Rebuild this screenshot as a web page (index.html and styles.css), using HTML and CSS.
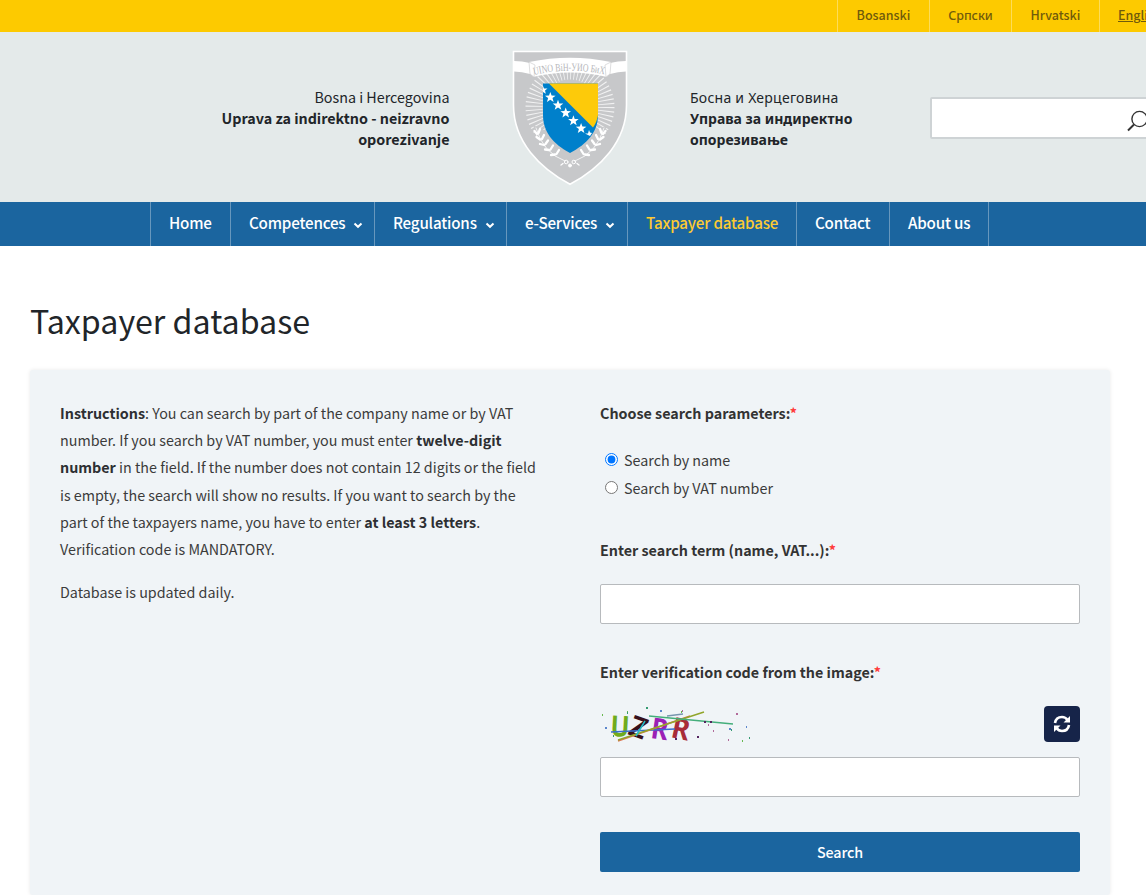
FILE: index.html
```html
<!DOCTYPE html>
<html lang="en">
<head>
<meta charset="utf-8">
<title>Taxpayer database</title>
<link rel="stylesheet" href="styles.css">
</head>
<body>
<div class="topbar">
  <a class="lang w92">Bosanski</a><a class="lang w82 cyr">Српски</a><a class="lang w88">Hrvatski</a><a class="lang w88 current">English</a>
</div>
<header class="header">
  <div class="title left"><span>Bosna i Hercegovina</span><br><b>Uprava za indirektno - neizravno<br>oporezivanje</b></div>
  <svg class="crest" width="116" height="136" viewBox="0 0 116 136">
    <path d="M1.500 1.500H114.500V55C114.500 92 88 118 58 134.300C28 118 1.500 92 1.500 55Z" fill="#c7c8ca" stroke="#fff" stroke-width="1.600"/>
    <circle cx="58" cy="57" r="36" fill="none" stroke="#fff" stroke-width="17" stroke-dasharray="1 2.770" stroke-opacity=".75"/>
    <path d="M21 75Q27 98 58 118Q89 98 95 75L85 80H31Z" fill="#c7c8ca"/>
    <path d="M2 11Q10 11 18 13V24Q10 21.500 2 21.500ZM114 11Q106 11 98 13V24Q106 21.500 114 21.500Z" fill="#fff"/>
    <path d="M17 12Q58 3.500 99 12L95 27Q58 18 21 27Z" fill="#fff"/>
    <path d="M17 12L23 15L22 27L18 24ZM99 12L93 15L94 27L98 24Z" fill="#fff" stroke="#c7c8ca" stroke-width=".6"/>
    <path id="arc" d="M22 25Q58 16.500 95 25" fill="none"/>
    <text class="motto"><textPath href="#arc" textLength="71" lengthAdjust="spacingAndGlyphs">UINO BiH-УИО БиХ</textPath></text>
    <path d="M31 33.500H86V65C86 82 75 94 58 103C41 94 31 82 31 65Z" fill="#0080cb"/>
    <path d="M37 33.500H86V65Q85 72 81 77.500Z" fill="#fdca0a"/>
    <g fill="#fff">
      <path id="star" d="M38.300 42L39.600 45.600L43.600 45.700L40.500 48.100L41.600 51.900L38.300 49.700L35 51.900L36.100 48.100L33 45.700L37 45.600Z"/>
      <use href="#star" x="7.700" y="7.800"/><use href="#star" x="15.400" y="15.500"/><use href="#star" x="23.100" y="23.300"/><use href="#star" x="30.800" y="31"/>
      <path d="M31 36L32 38.400L35.500 38.500L33 40.500L33.800 43.800L31 42ZM77 80L78 82.500L80 83L78 86L73 83.500H76Z"/>
    </g>
    <g fill="none" stroke="#fff" stroke-linecap="round">
      <path d="M24 78Q31 103 53 111M92 78Q85 103 63 111" stroke-width=".8"/>
      <path d="M22.500 81L25 84M24.500 87L28 89.500M28 94L32 95M33 99.500L37 100M39 105L43 104.500M28 79L26.500 83M32 85L30 89M36 90.500L33.500 94M41 95.500L38.500 99.500M47 100L44.500 104M93.500 81L91 84M91.500 87L88 89.500M88 94L84 95M83 99.500L79 100M77 105L73 104.500M88 79L89.500 83M84 85L86 89M80 90.500L82.500 94M75 95.500L77.500 99.500M69 100L71.500 104" stroke-width="2.300"/>
      <circle cx="54.200" cy="112" r="1.800"/><circle cx="61.800" cy="112" r="1.800"/><circle cx="58" cy="115.500" r="1.500" fill="#fff"/><path d="M51 113.500L49 115M65 113.500L67 115" stroke-width="1.300"/>
    </g>
  </svg>
  <div class="title right"><span>Босна и Херцеговина</span><br><b>Управа за индиректно<br>опорезивање</b></div>
  <div class="site-search">
    <svg width="24" height="24" viewBox="0 0 24 24" fill="none" stroke="#333" stroke-width="1.400"><circle cx="13.500" cy="9" r="7.600"/><path d="M8 14.500L2 20.500" stroke-width="2"/></svg>
  </div>
</header>
<nav class="nav">
  <a class="n1">Home</a>
  <a class="n2">Competences<svg class="chev" viewBox="0 0 10 7"><path d="M1.500 1.500L5 4.800L8.500 1.500"/></svg></a>
  <a class="n3">Regulations<svg class="chev" viewBox="0 0 10 7"><path d="M1.500 1.500L5 4.800L8.500 1.500"/></svg></a>
  <a class="n4">e-Services<svg class="chev" viewBox="0 0 10 7"><path d="M1.500 1.500L5 4.800L8.500 1.500"/></svg></a>
  <a class="n5 active">Taxpayer database</a>
  <a class="n6">Contact</a>
  <a class="n7">About us</a>
</nav>
<main class="main">
  <h1>Taxpayer database</h1>
  <section class="panel">
    <div class="info">
      <p><b>Instructions</b>: You can search by part of the company name or by VAT<br>number. If you search by VAT number, you must enter <b>twelve-digit</b><br><b>number</b> in the field. If the number does not contain 12 digits or the field<br>is empty, the search will show no results. If you want to search by the<br>part of the taxpayers name, you have to enter <b>at least 3 letters</b>.<br>Verification code is MANDATORY.</p>
      <p>Database is updated daily.</p>
    </div>
    <form class="form">
      <div class="label">Choose search parameters:<i>*</i></div>
      <div class="radios">
        <label><input type="radio" name="mode" checked>Search by name</label>
        <label><input type="radio" name="mode">Search by VAT number</label>
      </div>
      <div class="label term">Enter search term (name, VAT...):<i>*</i></div>
      <input class="field" type="text">
      <div class="label code">Enter verification code from the image:<i>*</i></div>
      <div class="captcha">
        <svg class="code-image" width="150" height="40" viewBox="0 0 150 40">
          <g class="glyphs">
            <text transform="translate(10 29) rotate(3)" fill="#70ac1c" textLength="19" lengthAdjust="spacingAndGlyphs">U</text>
            <text transform="translate(27 27) rotate(20)" fill="#36101c" textLength="17" lengthAdjust="spacingAndGlyphs">Z</text>
            <text transform="translate(50 31) rotate(8)" fill="#9b20b5" textLength="17" lengthAdjust="spacingAndGlyphs">R</text>
            <text transform="translate(70 30) rotate(12)" fill="#a82c38" textLength="18" lengthAdjust="spacingAndGlyphs">R</text>
          </g>
          <g fill="none" stroke-width="1.500">
            <path d="M11 25L75 22" stroke="#3a6fcc"/>
            <path d="M18 34L90 9" stroke="#de7552"/>
            <path d="M18 33L104 5" stroke="#91a52b"/>
            <path d="M49 9L133 17" stroke="#44ae7b"/>
            <path d="M67 9L83 7" stroke="#7795ad"/>
            <path d="M36 29L45 14" stroke="#25bcc5"/>
          </g>
          <path d="M2 7h1v2h-1zM27 4h1v2h-1zM81 4h1v2h-1zM142 33h1v2h-1z" fill="#69b850"/>
          <path d="M5 20h2v2H5zM60 3h2v2h-2zM129 21h2v2h-2zM146 19h1v2h-1z" fill="#5c86cc"/>
          <path d="M46 0h2v2h-2zM131 22h1v2h-1zM149 30h1v2h-1zM13 28h1v2h-1zM27 5h1v2h-1z" fill="#359b71"/>
          <path d="M75 31h2v2h-2zM97 29h2v2h-2zM104 14h2v2h-2zM110 14h2v2h-2z" fill="#54255f"/>
          <path d="M136 6h2v2h-2zM128 32h1v2h-1zM113 23h1v2h-1zM82 3h1v2h-1zM108 17h1v2h-1z" fill="#b16a9a"/>
        </svg>
        <button type="button" class="reload" aria-label="Reload">
          <svg width="18" height="18" viewBox="0 0 18 18" fill="none" stroke="#fff" stroke-width="2.600"><path d="M2 8Q3 2 9 2Q12.500 2 14.500 5M16 10Q15 16 9 16Q5.500 16 3.500 13"/><path d="M17 1V7.500H10.500ZM1 17V10.500H7.500Z" fill="#fff" stroke="none"/></svg>
        </button>
      </div>
      <input class="field" type="text">
      <button type="button" class="submit">Search</button>
    </form>
  </section>
</main>
</body>
</html>
```
FILE: styles.css
```css
* { box-sizing: border-box; }
html { overflow: hidden; }
body { margin: 0; width: 1146px; height: 895px; overflow: hidden; background: #fff; color: #212529; font-family: "Noto Sans CJK SC", "Noto Sans", sans-serif; font-size: 14.320px; }
a { white-space: nowrap; }
.topbar { display: flex; height: 32px; padding-left: 837px; background: #fdca00; overflow: hidden; }
.lang { flex: none; height: 32px; border-left: 1px solid #fddc59; font-size: 12.5px; font-weight: 500; line-height: 30px; text-align: center; color: #705b0c; }
.w92 { width: 92px; }
.w82 { width: 82px; }
.w88 { width: 88px; }
.cyr { font-family: "Noto Sans", sans-serif; line-height: 31px; }
.current { padding-left: 18px; text-align: left; text-decoration: underline; }
.header { display: flex; align-items: center; height: 170px; padding-top: 2px; background: #e4eaea; overflow: hidden; }
.title { flex: none; line-height: 21px; white-space: nowrap; }
.left { width: 449.500px; margin: 0 .5px 2px 0; text-align: right; }
.right { width: 240px; font-family: "Noto Sans", sans-serif; font-size: 14px; }
.right span { letter-spacing: .25px; }
.crest { flex: none; margin: 0 62px; }
.motto { font: 11px "Liberation Serif", serif; fill: #b5b6ba; }
.site-search { flex: none; width: 240px; height: 42px; border: 2px solid #ced3d5; border-radius: 2px; background: #fff; padding: 11px 0 0 194px; }
.nav { display: flex; height: 44px; padding-left: 150px; background: #1b659f; }
.nav a { flex: none; display: flex; align-items: center; height: 44px; border-left: 1px solid #6797bd; padding: 0 0 4px 18px; color: #fff; font-size: 15.200px; font-weight: 500; letter-spacing: -.2px; line-height: 40px; }
.nav .active { color: #fdca32; }
.n1 { width: 80px; }
.n2 { width: 144px; }
.n3 { width: 132px; }
.n4 { width: 121px; }
.n5 { width: 169px; }
.n6 { width: 93px; }
.nav .n7 { width: 100px; border-right: 1px solid #6797bd; }
.chev { width: 10px; height: 7px; margin: 6px 0 0 8px; fill: none; stroke: #fff; stroke-width: 2; }
.main { padding: 52px 30px 0; }
h1 { margin: 0 0 28px; font-size: 32.200px; font-weight: 400; line-height: 44px; }
.panel { display: grid; grid-template-columns: 480px 480px; gap: 60px; width: 1080px; height: 525px; padding: 29px 30px 0; background: #f0f4f7; border-radius: 3px; box-shadow: 0 0 4px rgba(0, 0, 0, .09); color: #333; }
.info { color: #3b3b3b; }
.info b { font-weight: 700; color: #2d2f32; }
.info p { margin: 0 0 16px; line-height: 27.200px; white-space: nowrap; }
.label { height: 27px; line-height: 27px; font-weight: 700; }
.label i { color: #ff3b3b; font-style: normal; }
.radios { margin-top: 19px; color: #3b3b3b; }
.radios label { display: flex; align-items: center; height: 28px; }
.radios input { width: 13px; height: 13px; margin: 0 6px 0 5px; }
.term { margin-top: 35px; }
.field { display: block; width: 480px; height: 40px; border: 1px solid #b7babd; border-radius: 2px; background: #fff; }
.term + .field { margin-top: 21px; }
.code { margin-top: 34px; }
.captcha { display: flex; align-items: center; justify-content: space-between; height: 36px; margin: 21px 0 15px; }
.code-image { margin-top: 6px; overflow: visible; }
.glyphs { font: 700 29px "Noto Sans", sans-serif; }
.reload { display: flex; align-items: center; justify-content: center; width: 36px; height: 36px; padding: 0; border: 0; border-radius: 4px; background: #162449; }
.submit { display: block; width: 480px; height: 40px; margin-top: 35px; padding: 0 0 2px; border: 0; border-radius: 2px; background: #1b659f; color: #fff; font: 500 14.320px "Noto Sans CJK SC", sans-serif; letter-spacing: -.1px; }
```
